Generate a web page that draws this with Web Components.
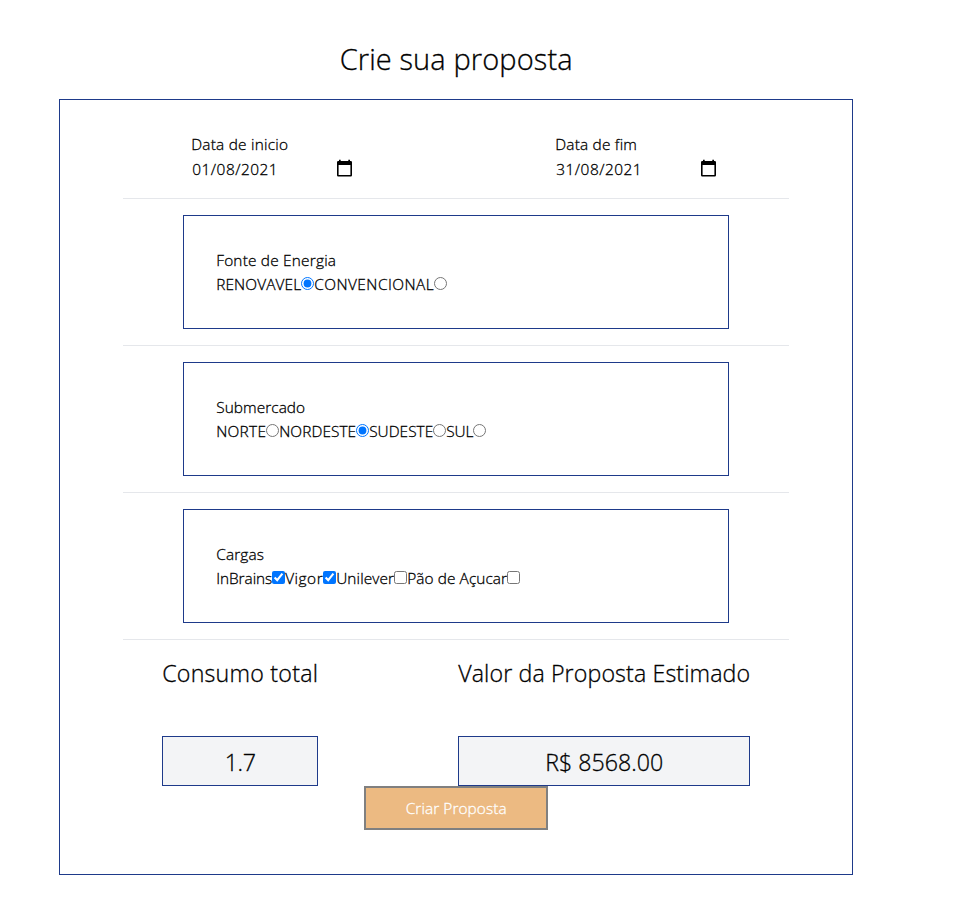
<!DOCTYPE html>
<html lang="pt-BR">
<head>
<meta charset="utf-8">
<title>Crie sua proposta</title>
<style>
body{margin:0;background:#fff;color:#000;font-family:"Open Sans","Noto Sans",sans-serif;font-size:15.4px;font-weight:300;-webkit-text-stroke:.3px currentColor;line-height:24px;--drop:1px}
</style>
</head>
<body>
<proposal-page></proposal-page>
<script>
// Single-line text whose tracking is adjusted to occupy a given width.
class FitText extends HTMLElement{
  connectedCallback(){
    this.attachShadow({mode:'open'}).innerHTML=`<style>:host{display:inline-block;white-space:nowrap;vertical-align:top}span{display:inline-block;vertical-align:top;margin:var(--drop) 0 calc(-1*var(--drop)) .2px}</style><span><slot></slot></span>`;
    const w=+this.getAttribute('w'),s=this.shadowRoot.querySelector('span'),n=this.textContent.length;
    this.style.width=w+'px';
    s.style.letterSpacing=((w-s.getBoundingClientRect().width)/n)+'px';
  }
}
class DateField extends HTMLElement{
  connectedCallback(){
    this.attachShadow({mode:'open'}).innerHTML=`<style>
    :host{display:block;width:164px}
    .row{display:flex;justify-content:space-between;height:26px;line-height:26px;padding:0 2px 0 1px}
    svg{display:block;margin-top:3px}
    </style><fit-text w="${this.getAttribute('w')}">${this.getAttribute('label')}</fit-text>
    <div class="row"><fit-text w="86">${this.getAttribute('value')}</fit-text>
    <svg width="17" height="19" viewBox="0 0 17 19"><path fill="#000" fill-rule="evenodd" d="M3 .8h1.700v1.200h7.600V.8H14v1.200h.8A1.200 1.200 0 0 1 16 3.200V16.300a1.200 1.200 0 0 1-1.200 1.200H2.200A1.200 1.200 0 0 1 1 16.300V3.200A1.200 1.200 0 0 1 2.200 2H3zM2.600 6v9.900h11.800V6z"/></svg></div>`;
  }
}
class OptionGroup extends HTMLElement{
  connectedCallback(){
    this.attachShadow({mode:'open'}).innerHTML=`<style>
    :host{display:block;box-sizing:border-box;width:546px;height:114px;border:1px solid #1e3a8a;padding:32px;margin:16px auto}
    .row{display:flex;height:24px}
    ::slotted(*){flex:none}
    </style><fit-text w="${this.getAttribute('w')}">${this.getAttribute('label')}</fit-text><div class="row"><slot></slot></div>`;
  }
}
class OptionItem extends HTMLElement{
  connectedCallback(){
    this.attachShadow({mode:'open'}).innerHTML=`<style>
    :host{display:flex}
    input{margin:5px 0 0;width:13px;height:13px;flex:none}
    </style><fit-text w="${this.getAttribute('w')}">${this.getAttribute('label')}</fit-text><input type="${this.getAttribute('type')||'radio'}" ${this.hasAttribute('checked')?'checked':''}>`;
  }
}
class TotalBox extends HTMLElement{
  connectedCallback(){
    this.attachShadow({mode:'open'}).innerHTML=`<style>
    :host{display:block;font-size:23.200px;line-height:34px;--drop:0px}
    .v{margin-top:46px;box-sizing:border-box;height:50px;border:1px solid #1e3a8a;background:#f3f4f6;text-align:center;line-height:50px}
    </style><fit-text w="${this.getAttribute('w')}">${this.getAttribute('label')}</fit-text><div class="v"><fit-text w="${this.getAttribute('vw')}">${this.getAttribute('value')}</fit-text></div>`;
  }
}
class ActionButton extends HTMLElement{
  connectedCallback(){
    this.attachShadow({mode:'open'}).innerHTML=`<style>
    :host{display:block;width:184px;margin:0 auto}
    button{display:block;box-sizing:border-box;width:184px;height:44px;border:2px solid #808080;border-radius:0;background:#ecba82;color:#fff;font:inherit;line-height:40px;padding:0;text-align:center}
    </style><button><fit-text w="101">${this.getAttribute('label')}</fit-text></button>`;
  }
}
class ProposalPage extends HTMLElement{
  connectedCallback(){
    this.attachShadow({mode:'open'}).innerHTML=`<style>
    :host{display:block;width:794px;padding:39px 0 0 59px}
    h1{margin:0 0 20px;font-weight:inherit;font-size:29px;line-height:40px;text-align:center;--drop:0px}
    .card{box-sizing:border-box;height:776px;border:1px solid #1e3a8a;padding:32px 63px}
    .dates{display:flex;gap:200px;padding-left:68px;margin-bottom:16px}
    hr{border:0;height:1px;margin:0;background:#e5e7eb}
    .totals{display:flex;gap:140px;padding-left:39px;margin-top:16px}
    </style>
    <h1><fit-text w="233">Crie sua proposta</fit-text></h1>
    <div class="card">
      <div class="dates"><date-field label="Data de inicio" w="97" value="01/08/2021"></date-field><date-field label="Data de fim" w="82" value="31/08/2021"></date-field></div>
      <hr>
      <option-group label="Fonte de Energia" w="120"><option-item label="RENOVAVEL" w="85" checked></option-item><option-item label="CONVENCIONAL" w="120"></option-item></option-group>
      <hr>
      <option-group label="Submercado" w="89"><option-item label="NORTE" w="50"></option-item><option-item label="NORDESTE" w="77" checked></option-item><option-item label="SUDESTE" w="64"></option-item><option-item label="SUL" w="27"></option-item></option-group>
      <hr>
      <option-group label="Cargas" w="48"><option-item type="checkbox" label="InBrains" w="56" checked></option-item><option-item type="checkbox" label="Vigor" w="38" checked></option-item><option-item type="checkbox" label="Unilever" w="58"></option-item><option-item type="checkbox" label="Pão de Açucar" w="100"></option-item></option-group>
      <hr>
      <div class="totals"><total-box label="Consumo total" w="156" value="1.7" vw="31"></total-box><total-box label="Valor da Proposta Estimado" w="292" value="R$ 8568.00" vw="118"></total-box></div>
      <action-button label="Criar Proposta"></action-button>
    </div>`;
  }
}
customElements.define('fit-text',FitText);
customElements.define('date-field',DateField);
customElements.define('option-group',OptionGroup);
customElements.define('option-item',OptionItem);
customElements.define('total-box',TotalBox);
customElements.define('action-button',ActionButton);
customElements.define('proposal-page',ProposalPage);
</script>
</body>
</html>
